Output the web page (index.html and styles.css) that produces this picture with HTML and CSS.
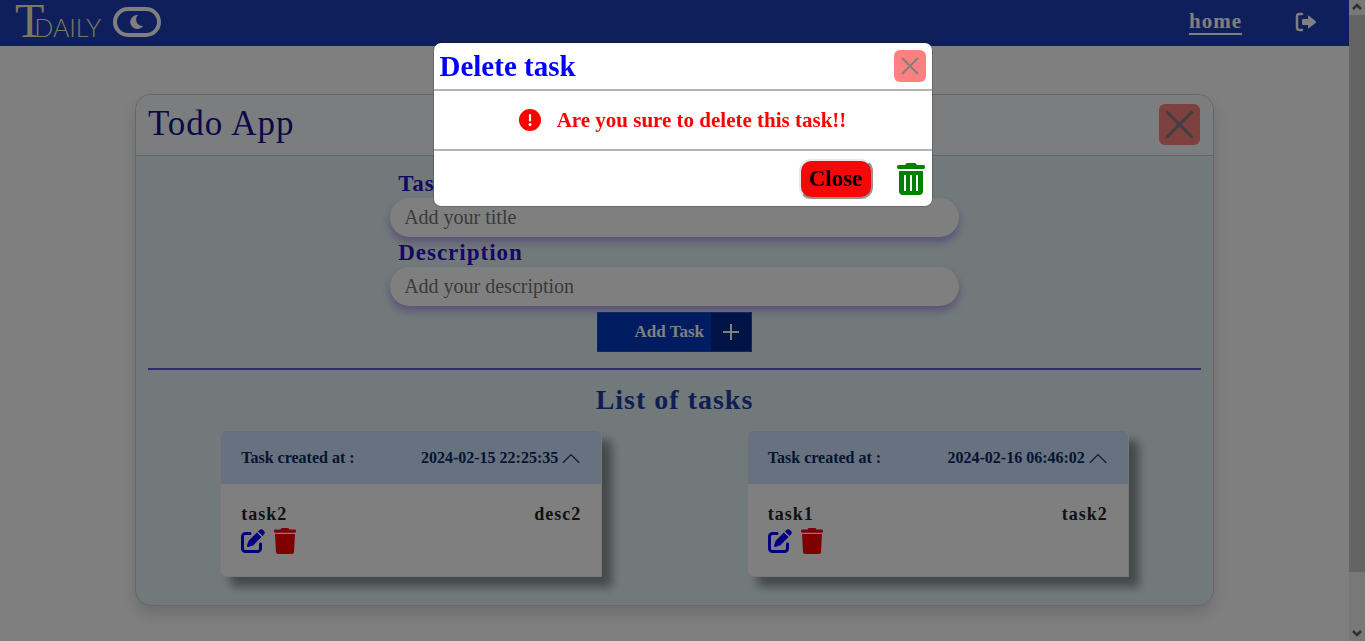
FILE: index.html
```html
<!DOCTYPE html>
<html lang="en">
<head>
<meta charset="utf-8">
<meta name="viewport" content="width=device-width, initial-scale=1">
<title>Todo App</title>
<link rel="stylesheet" href="styles.css">
</head>
<body>
<svg class="sprite" aria-hidden="true">
  <symbol id="close" viewBox="0 0 16 16"><path d="M2 2l12 12M14 2L2 14" fill="none" stroke="currentColor" stroke-width="1.5" stroke-linecap="round"/></symbol>
  <symbol id="chevron" viewBox="0 0 16 16"><path d="M1 12l7-7 7 7" fill="none" stroke="currentColor" stroke-width="1" stroke-linecap="round" stroke-linejoin="round"/></symbol>
  <symbol id="edit" viewBox="0 0 512 512"><path d="M471.600 21.700c-21.900-21.900-57.300-21.900-79.200 0L362.300 51.700l97.900 97.900 30.100-30.100c21.900-21.900 21.900-57.300 0-79.200L471.600 21.700zm-299.200 220c-6.100 6.100-10.800 13.600-13.500 21.900l-29.600 88.800c-2.900 8.600-.6 18.100 5.800 24.600s15.900 8.700 24.600 5.800l88.800-29.600c8.200-2.700 15.700-7.400 21.900-13.500L437.700 172.300 339.700 74.300 172.400 241.700zM96 64C43 64 0 107 0 160V416c0 53 43 96 96 96H352c53 0 96-43 96-96V320c0-17.700-14.300-32-32-32s-32 14.300-32 32v96c0 17.700-14.300 32-32 32H96c-17.700 0-32-14.300-32-32V160c0-17.700 14.300-32 32-32h96c17.700 0 32-14.300 32-32s-14.300-32-32-32H96z" fill="currentColor"/></symbol>
  <symbol id="trash" viewBox="0 0 22 26"><path d="M6.500 1.500L7.500 0H14.500L15.500 1.500H21Q22 1.500 22 3T21 4.800H1Q0 4.800 0 3T1 1.500zM1 6H21L20 24Q19.800 26 18 26H4Q2.200 26 2 24z" fill="currentColor"/></symbol>
</svg>
<div class="shell">
  <div class="page">
    <header class="navbar">
      <a class="logo" href="#" aria-label="T Daily"><span class="logo-initial">T</span><span class="logo-rest">DAILY</span></a>
      <button class="theme-toggle" type="button" aria-label="Dark mode">
        <svg width="14" height="16" viewBox="0 0 14 16"><path d="M8 1A7 7 0 1 0 13 12A6.500 6.500 0 0 1 8 1z" fill="currentColor"/></svg>
      </button>
      <nav class="nav-links">
        <a class="nav-home" href="#">home</a>
        <a class="nav-logout" href="#" aria-label="Log out">
          <svg width="22" height="20" viewBox="0 0 22 20"><path d="M7 2H4.500Q2 2 2 4.500V15.500Q2 18 4.500 18H7" fill="none" stroke="currentColor" stroke-width="2.500" stroke-linecap="round"/><path d="M8 7H13V4.200Q13 3 14.200 4L20.800 9.300Q21.600 10 20.800 10.700L14.200 16Q13 17 13 15.800V13H8Q7 13 7 12V8Q7 7 8 7z" fill="currentColor"/></svg>
        </a>
      </nav>
    </header>
    <main class="todo">
      <div class="todo-header">
        <h1>Todo App</h1>
        <button class="close-large" type="button" aria-label="Close app"><svg width="33" height="33"><use href="#close"/></svg></button>
      </div>
      <div class="todo-body">
        <form class="task-form">
          <label for="title">Task</label>
          <input id="title" type="text" placeholder="Add your title">
          <label for="description">Description</label>
          <input id="description" type="text" placeholder="Add your description">
          <button class="add-task" type="button">
            <span class="add-label">Add Task</span>
            <span class="add-icon"><svg width="16" height="16" viewBox="0 0 16 16"><path d="M8 0V16M0 8H16" stroke="currentColor" stroke-width="2"/></svg></span>
          </button>
        </form>
        <hr>
        <h2>List of tasks</h2>
        <div class="task-list">
          <article class="task">
            <button class="task-header" type="button" aria-expanded="true"><span>Task created at :</span><span class="task-date">2024-02-15 22:25:35 <svg width="18" height="18"><use href="#chevron"/></svg></span></button>
            <div class="task-body">
              <div class="task-text"><span>task2</span><span>desc2</span></div>
              <div class="task-actions">
                <button class="edit" type="button" aria-label="Edit task2"><svg width="24" height="24"><use href="#edit"/></svg></button>
                <button class="remove" type="button" aria-label="Delete task2"><svg width="22" height="26"><use href="#trash"/></svg></button>
              </div>
            </div>
          </article>
          <article class="task">
            <button class="task-header" type="button" aria-expanded="true"><span>Task created at :</span><span class="task-date">2024-02-16 06:46:02 <svg width="18" height="18"><use href="#chevron"/></svg></span></button>
            <div class="task-body">
              <div class="task-text"><span>task1</span><span>task2</span></div>
              <div class="task-actions">
                <button class="edit" type="button" aria-label="Edit task1"><svg width="24" height="24"><use href="#edit"/></svg></button>
                <button class="remove" type="button" aria-label="Delete task1"><svg width="22" height="26"><use href="#trash"/></svg></button>
              </div>
            </div>
          </article>
        </div>
      </div>
    </main>
  </div>
  <div class="scrollbar" aria-hidden="true">
    <svg width="16" height="15" viewBox="0 0 16 15"><path d="M4 9l4-4 4 4" fill="none" stroke="currentColor" stroke-width="2.500"/></svg>
    <div class="scroll-thumb"></div>
    <div class="scroll-rest"></div>
    <svg width="16" height="15" viewBox="0 0 16 15"><path d="M4 5l4 4 4-4" fill="none" stroke="currentColor" stroke-width="2.500"/></svg>
  </div>
</div>
<div class="backdrop">
  <section class="modal" role="dialog" aria-modal="true" aria-labelledby="modal-title">
    <div class="modal-header">
      <h2 id="modal-title">Delete task</h2>
      <button class="close-small" type="button" aria-label="Close dialog"><svg width="20" height="20"><use href="#close"/></svg></button>
    </div>
    <div class="modal-body">
      <svg width="22" height="22" viewBox="0 0 22 22"><circle cx="11" cy="11" r="11" fill="#f00"/><path d="M11 6V11.500" stroke="#fff" stroke-width="2.200" stroke-linecap="round"/><circle cx="11" cy="15.500" r="1.500" fill="#fff"/></svg>
      <p>Are you sure to delete this task!!</p>
    </div>
    <div class="modal-footer">
      <button class="btn-close" type="button">Close</button>
      <button class="btn-delete" type="button" aria-label="Delete">
        <svg width="28" height="32" viewBox="0 0 28 32"><path d="M8 2L9.500 0H18.500L20 2H26.500Q28 2 28 4T26.500 6H1.500Q0 6 0 4T1.500 2z" fill="currentColor"/><path fill-rule="evenodd" d="M2 8H26V28Q26 32 22 32H6Q2 32 2 28zM7 12V28H9V12zM13 12V28H15V12zM19 12V28H21V12z" fill="currentColor"/></svg>
      </button>
    </div>
  </section>
</div>
</body>
</html>
```
FILE: styles.css
```css
* { box-sizing: border-box; }
body { margin: 0; font-family: "Liberation Serif", "Times New Roman", serif; color: #212529; background: #fff; }
button { padding: 0; border: 0; background: none; font: inherit; color: inherit; cursor: pointer; }
h1, h2, p { margin: 0; }
svg { display: block; flex: none; }
.sprite { position: absolute; width: 0; height: 0; }

.shell { display: flex; min-height: 100vh; }
.page { flex: 1; min-width: 0; }

.navbar { display: flex; align-items: center; height: 46px; padding: 0 32px 2px 15px; background: #1e3eb8; color: #fff; }
.logo { display: flex; align-items: baseline; padding-top: 4px; color: #fff0c0; text-decoration: none; line-height: 46px; }
.logo-initial { font-size: 48px; }
.logo-rest { margin-left: -10px; font-family: Lato, sans-serif; font-weight: 300; font-size: 25px; }
.theme-toggle { display: flex; align-items: center; justify-content: center; width: 48px; height: 30px; margin-left: 12px; border: 4px solid #fff; border-radius: 15px; }
.nav-links { display: flex; align-items: center; gap: 53px; margin-left: auto; }
.nav-home { border-bottom: 2px solid #fff; color: #fff; font-size: 21px; font-weight: 700; letter-spacing: 1px; line-height: 24px; text-decoration: none; }
.nav-logout { color: #fff; }

.todo { width: 80%; margin: 48px auto 35px; border: 1px solid #ccc; border-radius: 16px; background: #e4f3f5; box-shadow: 0 8px 16px rgba(0, 0, 0, .15); }
.todo-header { display: flex; align-items: center; justify-content: space-between; height: 61px; padding: 0 13px 2px 12px; border-bottom: 1px solid #c0cacc; border-radius: 15px 15px 0 0; background: #f9fbff; }
.todo-header h1 { font-size: 35px; font-weight: 400; letter-spacing: 1px; color: #19108c; }
.close-large { display: grid; place-items: center; width: 41px; height: 41px; border-radius: 6px; background: #ff8080; color: #808080; }
.todo-body { padding: 13px 12px 28px; }

.task-form { display: flex; flex-direction: column; width: 54%; margin: 0 auto; }
.task-form label { padding-left: 8px; font-size: 23px; font-weight: 700; letter-spacing: 1px; line-height: 29px; color: #2a0fd0; }
.task-form input { width: 100%; height: 39px; margin-bottom: 1px; padding: 0 14px; border: 0; border-radius: 20px; background: #fff; box-shadow: 0 5px 8px rgba(80, 20, 220, .35); font: 20px "Liberation Serif", serif; }
.task-form input::placeholder { color: #757575; }
.add-task { display: flex; align-self: center; width: 155px; height: 40px; margin-top: 5px; border: 1px solid #2050c0; background: #0038c0; color: #fff; font-size: 17px; font-weight: 700; }
.add-label { flex: 1; align-self: center; padding-right: 7px; text-align: right; }
.add-icon { display: grid; place-items: center; align-self: stretch; width: 40px; background: #002890; }

.todo-body hr { height: 2px; margin: 16px 0 15px; border: 0; background: #5a50f0; }
.todo-body h2 { text-align: center; font-size: 28px; font-weight: 700; letter-spacing: 1px; line-height: 29px; color: #1e3ca8; }
.task-list { display: grid; grid-template-columns: 1fr 1fr; justify-items: center; margin-top: 16px; }
.task { width: 382px; max-width: 96%; border: 1px solid #f0f0f0; border-radius: 6px 6px 0 6px; background: #fff; box-shadow: 10px 10px 10px rgba(0, 0, 0, .4); }
.task-header { display: flex; align-items: center; justify-content: space-between; width: 100%; height: 53px; padding: 0 21px 0 20px; border-radius: 5px 5px 0 0; background: #cfe2ff; color: #052c65; font-size: 16px; font-weight: 700; }
.task-date { display: flex; align-items: center; gap: 4px; }
.task-body { padding: 18px 20px 22px; }
.task-text { display: flex; justify-content: space-between; font-size: 18px; font-weight: 700; letter-spacing: 1px; line-height: 24px; }
.task-actions { display: flex; align-items: center; gap: 9px; padding-top: 2px; }
.edit { color: #00f; }
.remove { color: #f00; }

.scrollbar { display: flex; flex-direction: column; width: 16px; background: #f1f1f1; color: #606060; }
.scroll-thumb { flex: 557; background: #c8c8c8; }
.scroll-rest { flex: 54; }

.backdrop { position: fixed; inset: 0; padding: 42px 8px; background: rgba(0, 0, 0, .5); }
.modal { max-width: 500px; margin: 0 auto; border: 1px solid rgba(0, 0, 0, .18); border-radius: 8px; background: #fff; background-clip: padding-box; }
.modal-header { display: flex; align-items: center; justify-content: space-between; height: 48px; padding: 0 6px; border-bottom: 2px solid #b8b4b4; }
.modal-header h2 { font-size: 29px; font-weight: 700; color: #00f; }
.close-small { display: grid; place-items: center; width: 32px; height: 32px; border-radius: 6px; background: #ff8080; color: #808080; }
.modal-body { display: flex; align-items: center; justify-content: center; gap: 16px; height: 60px; border-bottom: 2px solid #b8b4b4; font-size: 21px; font-weight: 700; color: #f00; }
.modal-footer { display: flex; align-items: center; justify-content: flex-end; gap: 24px; height: 55px; padding-right: 7px; }
.btn-close { width: 74px; height: 40px; border: 2px outset #e8e8e8; border-radius: 12px; background: #f60808; color: #000; font-size: 23px; font-weight: 700; }
.btn-delete { color: #008000; }
```
